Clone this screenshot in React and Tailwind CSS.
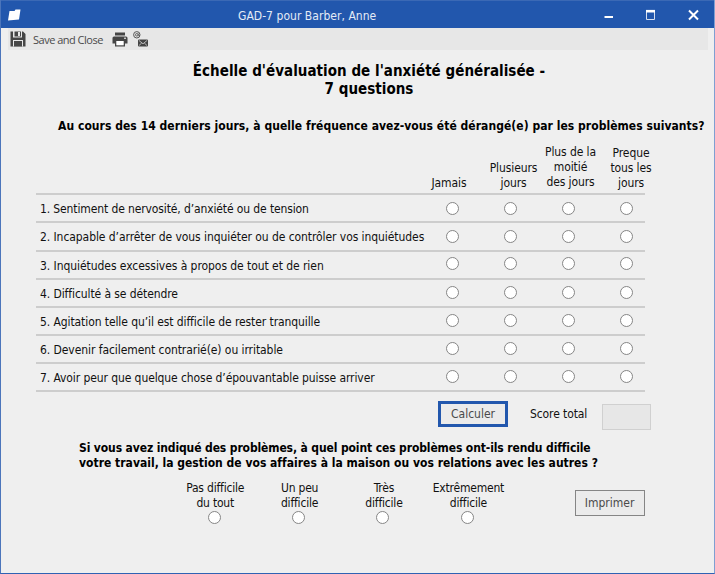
import React from "react";

const questions = [
  { text: "1. Sentiment de nervosité, d’anxiété ou de tension", h: "h-[28px]", sp: "tracking-[-0.12px]", r: "pt-[7px]" },
  { text: "2. Incapable d’arrêter de vous inquiéter ou de contrôler vos inquiétudes", h: "h-[29px]", sp: "tracking-[-0.07px]", r: "pt-[7px]" },
  { text: "3. Inquiétudes excessives à propos de tout et de rien", h: "h-[28px]", sp: "tracking-[-0.06px]", r: "pt-[5px]" },
  { text: "4. Difficulté à se détendre", h: "h-[28px]", sp: "tracking-[-0.09px]", r: "pt-[6px]" },
  { text: "5. Agitation telle qu’il est difficile de rester tranquille", h: "h-[28px]", sp: "tracking-[-0.09px]", r: "pt-[6px]" },
  { text: "6. Devenir facilement contrarié(e) ou irritable", h: "h-[28px]", sp: "tracking-[-0.07px]", r: "pt-[6px]" },
  { text: "7. Avoir peur que quelque chose d’épouvantable puisse arriver", h: "h-[28px]", sp: "tracking-[-0.09px]", r: "pt-[6px]" },
];

const frequencies = [
  { lines: ["Jamais"], pad: "pl-[2px]" },
  { lines: ["Plusieurs", "jours"], pad: "pl-[17px] -ml-[1px] -mr-[1px]" },
  { lines: ["Plus de la", "moitié", "des jours"], pad: "pl-[17px] pb-[1px]" },
  { lines: ["Preque", "tous les", "jours"], pad: "pl-[22px]" },
];

const difficulties = [
  ["Pas difficile", "du tout"],
  ["Un peu", "difficile"],
  ["Très", "difficile"],
  ["Extrêmement", "difficile"],
];

function Radio() {
  return <span className="block h-[13px] w-[13px] shrink-0 rounded-full border border-[#868686] bg-white" />;
}

function TitleBar() {
  return (
    <header className="flex h-[28px] shrink-0 items-center border-t border-[#3b69b5] bg-[#2257ad] text-white">
      <svg className="ml-[7px]" width="13" height="12" viewBox="0 0 13 12">
        <path d="M1.5 2h5L7.5 0.5H12.5L11 10.5L0 11.5Z" fill="#fff" />
      </svg>
      <span className="ml-[217px] whitespace-nowrap pt-[3px] text-[12px] leading-[15px] tracking-[0.04px] text-[#e4ebf6]">
        GAD-7 pour Barber, Anne
      </span>
      <span className="ml-auto flex items-center pr-[15px]">
        <svg width="95" height="12" viewBox="0 0 95 12">
          <path d="M0.5 8H9" stroke="#fff" strokeWidth="2" />
          <path d="M42.5 2.5V10.5H50.5V2.5" fill="none" stroke="#d5dff0" strokeWidth="1" />
          <path d="M42 2.2H51" stroke="#fff" strokeWidth="2.6" />
          <path d="M85 1.5L94 10.5M94 1.5L85 10.5" stroke="#fff" strokeWidth="2" />
        </svg>
      </span>
    </header>
  );
}

function Toolbar() {
  return (
    <div className="ml-[7px] mr-[6px] flex h-[22px] shrink-0 items-center bg-[#e7e7e7]">
      <svg className="ml-[2px]" width="16" height="16" viewBox="0 0 16 16">
        <path d="M0.5 0.5H3V6.5H12V0.5H13L15.5 3V15.5H0.5Z" fill="#454545" />
        <path d="M4.5 0.5H11V5.5H4.5Z" fill="#454545" />
        <path d="M8 1H10V5H8Z" fill="#e7e7e7" />
        <path d="M3 9H13V15.5H3Z" fill="#e7e7e7" />
        <path d="M4 10H12V15.5H4Z" fill="#454545" />
      </svg>
      <span className="ml-[7px] w-[72px] whitespace-nowrap pt-[1px] font-['Open_Sans',sans-serif] text-[11px] leading-[14px] tracking-[-0.5px] text-[#4a4a4a]">
        Save and Close
      </span>
      <svg className="ml-[7px]" width="16" height="15" viewBox="0 0 16 15">
        <path d="M3 0.5H13V3.5H3Z" fill="#454545" />
        <path d="M2 4.5H14Q15.5 4.5 15.5 6V11.5H0.5V6Q0.5 4.5 2 4.5Z" fill="#454545" />
        <path d="M3 8H13V14.5H3Z" fill="#454545" />
        <path d="M4.3 9H11.7V13.3H4.3Z" fill="#fff" />
        <path d="M12 6.2H14" stroke="#fff" />
      </svg>
      <svg className="ml-[5px]" width="16" height="16" viewBox="0 0 16 16">
        <circle cx="3.8" cy="3.8" r="3.2" fill="none" stroke="#555" strokeWidth="1" />
        <circle cx="3.8" cy="3.8" r="1.3" fill="none" stroke="#555" strokeWidth="0.9" />
        <path d="M5.3 2.5V4.3Q5.6 5.4 7 4.5" fill="none" stroke="#555" strokeWidth="0.8" />
        <rect x="5" y="8.5" width="10" height="7" rx="1" fill="#454545" />
        <path d="M6 9.5L10 12.8L14 9.5M6 14.5L8.7 12M14 14.5L11.3 12" fill="none" stroke="#d5d5d5" strokeWidth="0.8" />
      </svg>
    </div>
  );
}

export default function App() {
  return (
    <div className="flex h-[574px] w-[715px] flex-col overflow-hidden border-x border-b border-l-[#4b75bb] border-r-[#7f9fd2] border-b-[#2f62b3] bg-[#efefef] font-['DejaVu_Sans_Condensed','DejaVu_Sans',sans-serif] text-[12px] leading-[15px] text-[#111]">
      <TitleBar />
      <Toolbar />
      <main className="flex flex-col">
        <h1 className="ml-[162px] mt-[12px] flex w-[412px] flex-col items-center whitespace-nowrap text-[15px] font-bold leading-[18px] tracking-[0.03px] text-black">
          <span>Échelle d'évaluation de l'anxiété généralisée -</span>
          <span>7 questions</span>
        </h1>
        <p className="ml-[57px] mt-[21px] whitespace-nowrap font-bold tracking-[0.045px] text-black">
          Au cours des 14 derniers jours, à quelle fréquence avez-vous été dérangé(e) par les problèmes suivants?
        </p>
        <div className="ml-[418px] mt-[9px] flex h-[48px] items-end tracking-[-0.1px]">
          {frequencies.map((f) => (
            <div key={f.lines[0]} className={`w-[58px] whitespace-nowrap ${f.pad}`}>
              <div className="-mx-2 flex flex-col items-center">
                {f.lines.map((l) => (
                  <span key={l}>{l}</span>
                ))}
              </div>
            </div>
          ))}
        </div>
        <div className="ml-[35px] mt-[2px] w-[609px] border-b-2 border-[#cdcdcd]">
          {questions.map((q) => (
            <div key={q.text} className={`flex border-t-2 border-[#cdcdcd] ${q.h}`}>
              <span className={`w-[410px] whitespace-nowrap pl-[4px] pt-[7px] ${q.sp}`}>{q.text}</span>
              <div className={`flex gap-[45px] ${q.r}`}>
                <Radio />
                <Radio />
                <Radio />
                <Radio />
              </div>
            </div>
          ))}
        </div>
        <div className="ml-[437px] mt-[9px] flex h-[28px] items-start">
          <button className="h-[26px] w-[70px] border-[3px] border-[#2257ad] bg-[#ebebeb] text-[#4a4a4a]">
            Calculer
          </button>
          <span className="ml-[22px] mt-[6px] w-[72px] whitespace-nowrap tracking-[-0.1px]">Score total</span>
          <span className="mt-[3px] h-[26px] w-[49px] border border-[#d0d0d0] bg-[#e7e7e7]" />
        </div>
        <p className="ml-[78px] mt-[12px] flex flex-col whitespace-nowrap font-bold text-black">
          <span className="tracking-[-0.12px]">
            Si vous avez indiqué des problèmes, à quel point ces problèmes ont-ils rendu difficile
          </span>
          <span className="tracking-[0.01px]">
            votre travail, la gestion de vos affaires à la maison ou vos relations avec les autres ?
          </span>
        </p>
        <div className="ml-[171px] mt-[10px] flex">
          {difficulties.map(([a, b]) => (
            <div key={a} className="flex w-[84.4px] flex-col items-center whitespace-nowrap tracking-[-0.2px]">
              <span className="pl-[2px]">{a}</span>
              <span className="pl-[2px]">{b}</span>
              <Radio />
            </div>
          ))}
          <button className="ml-[65px] mt-[9px] h-[26px] w-[70px] border border-[#858585] bg-[#ebebeb] text-[#4a4a4a]">
            Imprimer
          </button>
        </div>
      </main>
    </div>
  );
}
